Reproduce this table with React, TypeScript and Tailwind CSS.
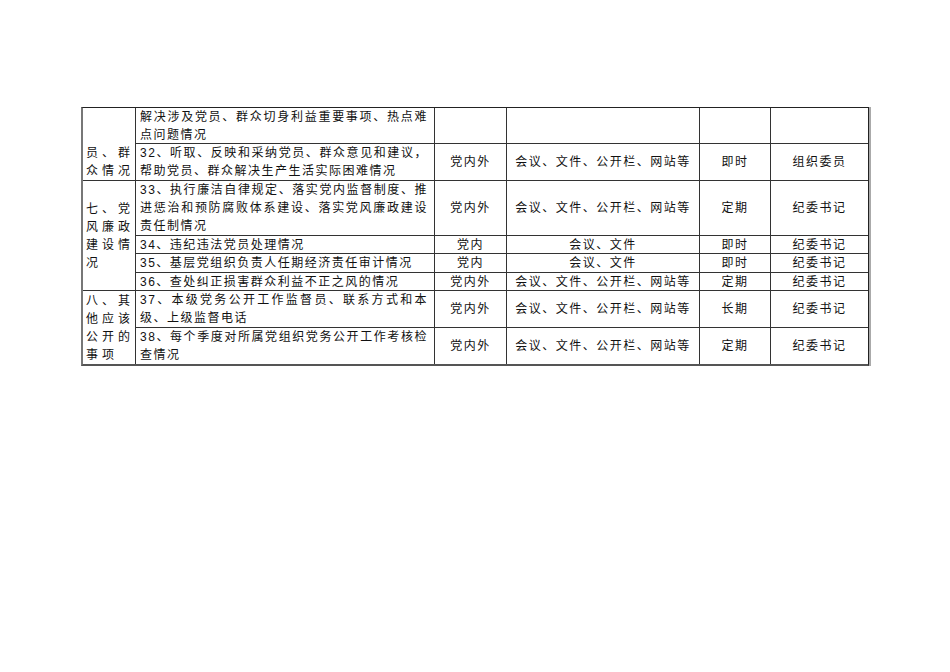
import React from "react";

type Row = {
  item: string;
  scope?: string;
  method?: string;
  time?: string;
  owner?: string;
};

type Group = {
  title: string[];
  span: string;
  align: string;
  rows: Row[];
};

const full = "会议、文件、公开栏、网站等";

const groups: Group[] = [
  {
    title: ["员、群", "众情况"],
    span: "row-span-2",
    align: "items-end",
    rows: [
      { item: "解决涉及党员、群众切身利益重要事项、热点难点问题情况" },
      {
        item: "32、听取、反映和采纳党员、群众意见和建议，帮助党员、群众解决生产生活实际困难情况",
        scope: "党内外",
        method: full,
        time: "即时",
        owner: "组织委员",
      },
    ],
  },
  {
    title: ["七、党", "风廉政", "建设情", "况"],
    span: "row-span-4",
    align: "items-center",
    rows: [
      {
        item: "33、执行廉洁自律规定、落实党内监督制度、推进惩治和预防腐败体系建设、落实党风廉政建设责任制情况",
        scope: "党内外",
        method: full,
        time: "定期",
        owner: "纪委书记",
      },
      {
        item: "34、违纪违法党员处理情况",
        scope: "党内",
        method: "会议、文件",
        time: "即时",
        owner: "纪委书记",
      },
      {
        item: "35、基层党组织负责人任期经济责任审计情况",
        scope: "党内",
        method: "会议、文件",
        time: "即时",
        owner: "纪委书记",
      },
      {
        item: "36、查处纠正损害群众利益不正之风的情况",
        scope: "党内外",
        method: full,
        time: "定期",
        owner: "纪委书记",
      },
    ],
  },
  {
    title: ["八、其", "他应该", "公开的", "事项"],
    span: "row-span-2",
    align: "items-center",
    rows: [
      {
        item: "37、本级党务公开工作监督员、联系方式和本级、上级监督电话",
        scope: "党内外",
        method: full,
        time: "长期",
        owner: "纪委书记",
      },
      {
        item: "38、每个季度对所属党组织党务公开工作考核检查情况",
        scope: "党内外",
        method: full,
        time: "定期",
        owner: "纪委书记",
      },
    ],
  },
];

const Center: React.FC<{ text?: string }> = ({ text }) => (
  <div className="bg-white flex items-center justify-center whitespace-nowrap">
    {text || ""}
  </div>
);

const App: React.FC = () => {
  return (
    <div className="w-[950px] h-[672px] bg-white pt-[107px] pl-[81px] text-[#111] text-[12px] leading-[18px] tracking-[1.5px] [font-family:'Liberation_Sans','Noto_Sans_CJK_SC',sans-serif]">
      <div className="w-fit border-t border-t-[#222] border-l-2 border-l-[#777] border-b-2 border-b-[#555] border-r border-r-[#222] shadow-[2px_0_0_#aaa]">
        <div className="grid grid-cols-[52px_298px_71px_192px_70px_97px] grid-rows-[35px_36px_54px_17px_18px_17px_36px_36px] gap-px bg-[#333]">
          {groups.map((group) => (
            <React.Fragment key={group.title.join("")}>
              <div
                className={`bg-white flex ${group.align} ${group.span} pl-[3px] tracking-[4px]`}
              >
                <div>
                  {group.title.map((line) => (
                    <div key={line} className="whitespace-nowrap">
                      {line}
                    </div>
                  ))}
                </div>
              </div>
              {group.rows.map((row) => (
                <React.Fragment key={row.item}>
                  <div className="bg-white flex items-center pl-[4px] pr-[6px]">
                    <div className="w-full text-justify">{row.item}</div>
                  </div>
                  <Center text={row.scope} />
                  <Center text={row.method} />
                  <Center text={row.time} />
                  <Center text={row.owner} />
                </React.Fragment>
              ))}
            </React.Fragment>
          ))}
        </div>
      </div>
    </div>
  );
};

export default App;
